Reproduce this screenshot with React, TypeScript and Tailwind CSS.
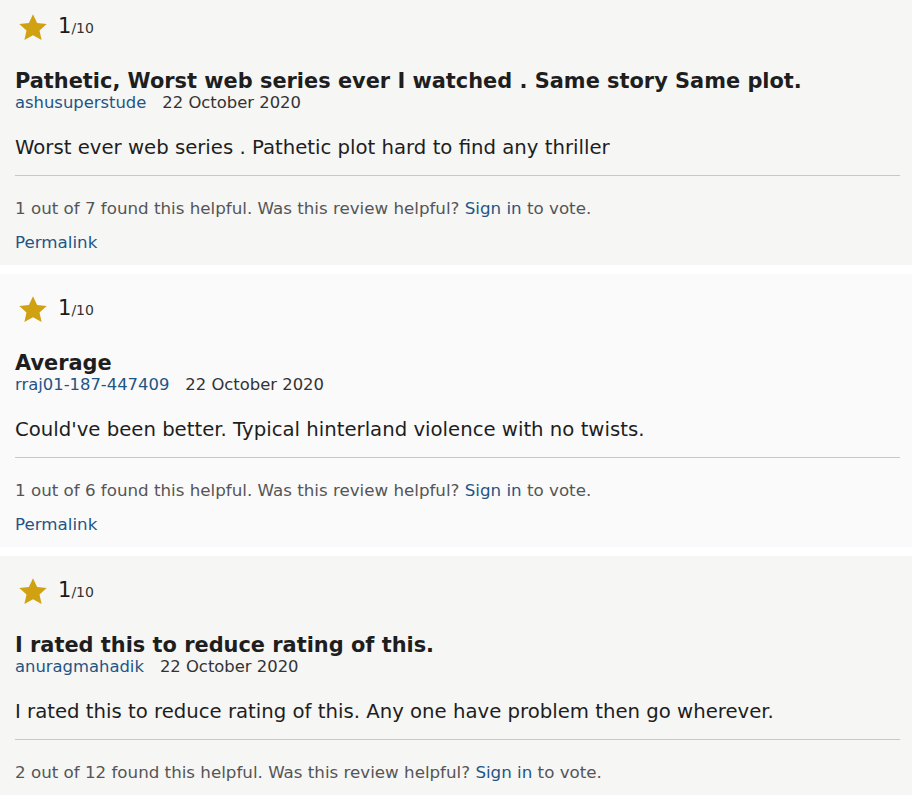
import React from "react";

type Review = {
  title: string;
  author: string;
  date: string;
  body: string;
  helpful: string;
  bg: string;
};

const reviews: Review[] = [
  {
    title: "Pathetic, Worst web series ever I watched . Same story Same plot.",
    author: "ashusuperstude",
    date: "22 October 2020",
    body: "Worst ever web series . Pathetic plot hard to find any thriller",
    helpful: "1 out of 7 found this helpful.",
    bg: "bg-[#f6f6f5]",
  },
  {
    title: "Average",
    author: "rraj01-187-447409",
    date: "22 October 2020",
    body: "Could've been better. Typical hinterland violence with no twists.",
    helpful: "1 out of 6 found this helpful.",
    bg: "bg-[#fafafa]",
  },
  {
    title: "I rated this to reduce rating of this.",
    author: "anuragmahadik",
    date: "22 October 2020",
    body: "I rated this to reduce rating of this. Any one have problem then go wherever.",
    helpful: "2 out of 12 found this helpful.",
    bg: "bg-[#f6f6f5]",
  },
];

function Star() {
  return (
    <svg width="30" height="29" viewBox="0 0 24 23" className="block">
      <path
        d="M12 0.8l3.3 7.1 7.7 0.8-5.8 5.2 1.7 7.6L12 17.6l-6.9 3.9 1.7-7.6L1 8.7l7.7-0.8z"
        fill="#d0a212"
      />
    </svg>
  );
}

function Card({ r, last }: { r: Review; last: boolean }) {
  return (
    <div className={`${r.bg} pl-[15px] pr-[12px] pt-[21px] pb-[13px] mb-[9px]`}>
      <div className="flex items-center h-[28px]">
        <div className="ml-[3px] w-[30px]">
          <Star />
        </div>
        <div className="ml-[10px] flex items-baseline text-[#1a1a1a]">
          <span className="text-[21px] leading-[24px]">1</span>
          <span className="text-[14px] leading-[24px] text-[#333]">/10</span>
        </div>
      </div>
      <div className="mt-[28px] text-[20.9px] leading-[24px] font-bold text-[#1e1e1e]">{r.title}</div>
      <div className="text-[16.4px] leading-[20px] text-[#333]">
        <span className="text-[#1f5585]">{r.author}</span>
        <span className="ml-[16px]">{r.date}</span>
      </div>
      <div className="mt-[23px] text-[19.7px] leading-[24px] text-[#1e1e1e]">{r.body}</div>
      <div className="mt-[15px] border-t border-[#c8c8c8]" />
      <div className="mt-[22px] text-[16.7px] leading-[20px] text-[#555]">
        {r.helpful} Was this review helpful? <span className="text-[#1f5585]">Sign in</span> to vote.
      </div>
      {!last && (
        <div className="mt-[14px] text-[16.7px] leading-[20px] text-[#1f5585]">Permalink</div>
      )}
    </div>
  );
}

export default function App() {
  return (
    <div
      className="bg-white min-h-screen -mt-[8px]"
      style={{ fontFamily: '"DejaVu Sans", Verdana, sans-serif' }}
    >
      {reviews.map((r, i) => (
        <Card key={i} r={r} last={i === reviews.length - 1} />
      ))}
    </div>
  );
}
